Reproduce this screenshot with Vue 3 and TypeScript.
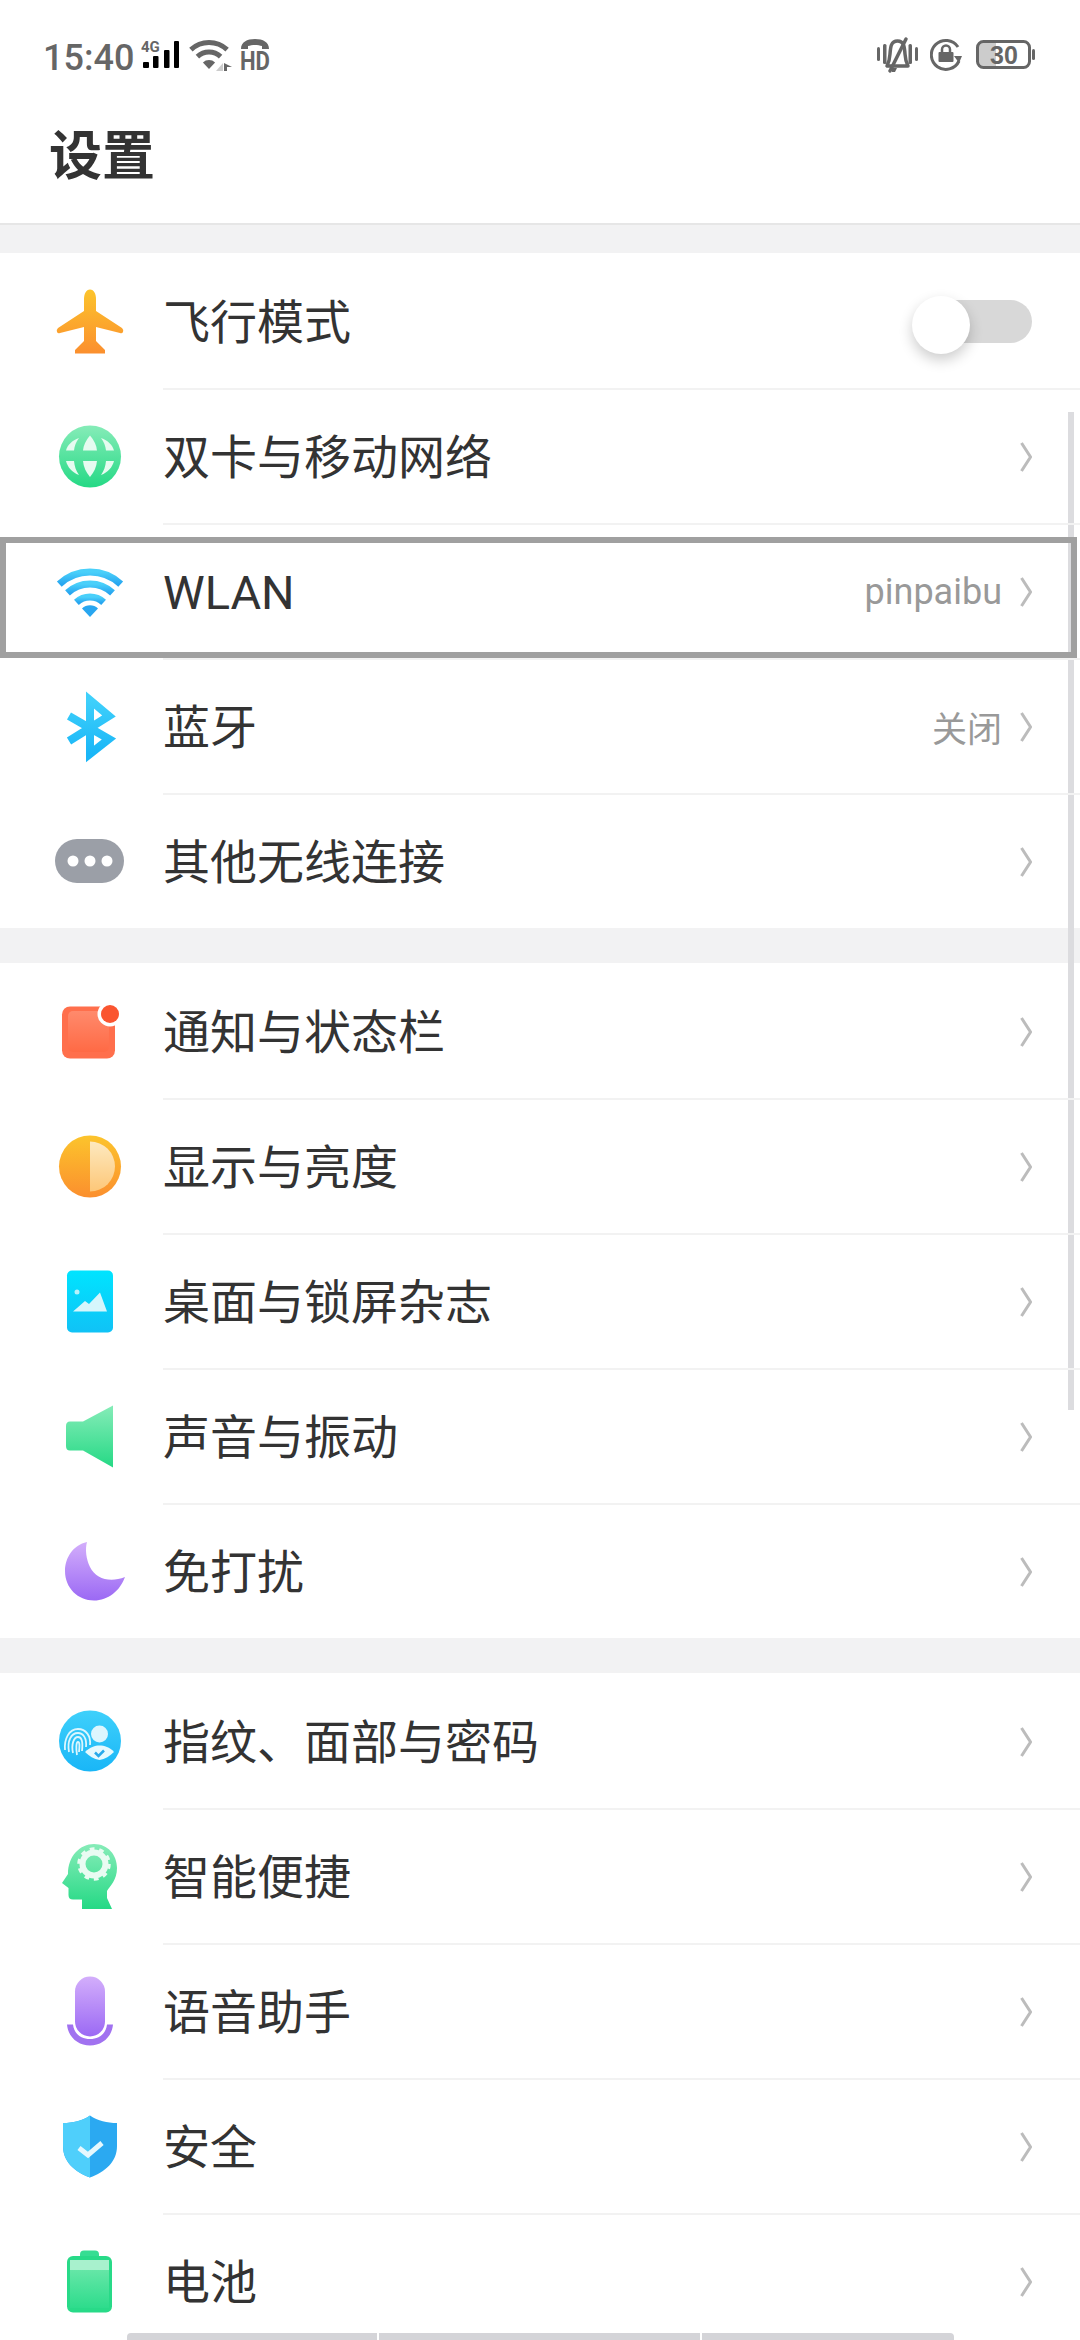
<template>
  <div class="page">
    <svg class="defs" width="0" height="0" aria-hidden="true">
      <defs>
        <linearGradient id="g-orange" x1="0" y1="0" x2="0" y2="1"><stop offset="0" stop-color="#fcc42c" /><stop offset="1" stop-color="#fb8f2e" /></linearGradient>
        <linearGradient id="g-green" x1="0" y1="0" x2="0" y2="1"><stop offset="0" stop-color="#86ecb8" /><stop offset="1" stop-color="#25d985" /></linearGradient>
        <linearGradient id="g-blue" x1="0" y1="0" x2="0" y2="1"><stop offset="0" stop-color="#4ad0fa" /><stop offset="1" stop-color="#28a6f0" /></linearGradient>
        <linearGradient id="g-sky" x1="0" y1="0" x2="0" y2="1"><stop offset="0" stop-color="#3fd0fb" /><stop offset="1" stop-color="#19b6f7" /></linearGradient>
        <linearGradient id="g-cyan" x1="0" y1="0" x2="0" y2="1"><stop offset="0" stop-color="#00e4ff" /><stop offset="1" stop-color="#10c2f6" /></linearGradient>
        <linearGradient id="g-red" x1="0" y1="0" x2="0" y2="1"><stop offset="0" stop-color="#ff8a6c" /><stop offset="1" stop-color="#ff6a45" /></linearGradient>
        <linearGradient id="g-purple" x1="0" y1="0" x2="0" y2="1"><stop offset="0" stop-color="#d3aefb" /><stop offset="1" stop-color="#9b69f4" /></linearGradient>
        <linearGradient id="g-pale" x1="0" y1="0" x2="0" y2="1"><stop offset="0" stop-color="#fde9bf" /><stop offset="1" stop-color="#fdc778" /></linearGradient>
        <linearGradient id="g-battery" x1="0" y1="0" x2="0" y2="1"><stop offset="0" stop-color="#74e9ae" /><stop offset="1" stop-color="#2ddc8c" /></linearGradient>
      </defs>
    </svg>

    <header class="header">
      <div class="status-bar">
        <span class="time">15:40</span>
        <svg class="signal" width="38" height="44" viewBox="0 0 38 44">
          <text x="0" y="16" class="net-text">4G</text>
          <rect x="2" y="26" width="6" height="6" rx="1" />
          <rect x="12" y="20" width="5.500" height="12" rx="1" />
          <rect x="23" y="14" width="5.500" height="18" rx="1" />
          <rect x="33" y="5" width="5" height="27" rx="1" />
        </svg>
        <svg class="wifi-small" width="44" height="44" viewBox="0 0 44 44">
          <g fill="none" stroke="#666" stroke-width="5">
            <path d="M1.900 13.600A26.500 26.500 0 0 1 38.100 13.600" />
            <path d="M8.400 20.600A17 17 0 0 1 31.600 20.600" />
          </g>
          <path d="M20 33L13.900 26.400A9 9 0 0 1 26.100 26.400Z" fill="#666" />
          <path d="M34 27V35H27Z" fill="#ccc" />
          <path d="M35 27L43 31H38V35H35Z" fill="#666" />
        </svg>
        <svg class="hd" width="30" height="44" viewBox="0 0 30 44">
          <path d="M1 13C1 6 7 3 15 3C23 3 29 6 29 13H22V10C18 8.500 12 8.500 8 10V13Z" fill="#666" />
          <text x="0" y="34" class="hd-text" textLength="30" lengthAdjust="spacingAndGlyphs">HD</text>
        </svg>

        <div class="status-right">
          <svg width="41" height="44" viewBox="0 0 41 44">
            <g fill="#666">
              <rect x="0" y="11" width="3" height="14" rx="1.500" />
              <rect x="6" y="8" width="3.500" height="20" rx="1.500" />
              <rect x="31.500" y="8" width="3.500" height="20" rx="1.500" />
              <rect x="38" y="11" width="3" height="14" rx="1.500" />
            </g>
            <path d="M20.500 5C14 5 13.500 11 13 18C12.700 23 11.500 27 10 30H31C29.500 27 28.300 23 28 18C27.500 11 27 5 20.500 5Z" fill="none" stroke="#666" stroke-width="3.500" stroke-linejoin="round" />
            <path d="M29 3L13 35" stroke="#666" stroke-width="3.500" stroke-linecap="round" />
            <path d="M15 32H20L18 36H15Z" fill="#666" />
          </svg>
          <svg width="32" height="44" viewBox="0 0 32 44">
            <path d="M28 11A14.500 14.500 0 1 0 29 25" fill="none" stroke="#666" stroke-width="3" />
            <path d="M24 20L32 20L29 27Z" fill="#666" />
            <rect x="8.500" y="16" width="15" height="10" rx="1" fill="#666" />
            <path d="M12 16V13.500A4 4 0 0 1 20 13.500V16" fill="none" stroke="#666" stroke-width="2.500" />
          </svg>
          <svg class="battery" width="59" height="44" viewBox="0 0 59 44">
            <path d="M5 6H20V31H5A3 3 0 0 1 3 28V9A3 3 0 0 1 5 6Z" fill="#ccc" />
            <rect x="1.500" y="5.500" width="52" height="26" rx="6" fill="none" stroke="#666" stroke-width="3" />
            <rect x="56" y="13" width="3" height="11" rx="1.500" fill="#666" />
            <text x="28" y="27.500" class="batt-text" text-anchor="middle">30</text>
          </svg>
        </div>
      </div>
      <h1 class="title">设置</h1>
    </header>

    <div class="scrollbar"></div>

    <main class="groups">
      <section v-for="(group, i) in groups" :key="i" class="group">
        <div v-for="row in group" :key="row.label" class="row" :class="{ focused: row.focused }">
          <svg class="icon" width="80" height="80" viewBox="0 0 80 80">
            <path v-if="row.icon === 'plane'" fill="url(#g-orange)" d="M40 8.500C44 8.500 46 13 46 18V30L72 47Q74 49 73 51Q72 53 70 52L46 46V60L55 69V72.500H25V69L34 60V46L10 52Q8 53 7 51Q6 49 8 47L34 30V18C34 13 36 8.500 40 8.500Z" />

            <template v-else-if="row.icon === 'globe'">
              <circle cx="40" cy="40.500" r="31" fill="url(#g-green)" />
              <g fill="#e6fbf0">
                <path d="M40 19.500C44 24 46.500 29 47 34.500H33C33.500 29 36 24 40 19.500Z" />
                <path d="M33 45H47C46.500 51 44 56 40 61C36 56 33.500 51 33 45Z" />
                <path d="M29 22C26 26 24.500 30 24 34.500H16C17.500 29 22 24.500 29 22Z" />
                <path d="M51 22C54 26 55.500 30 56 34.500H64C62.500 29 58 24.500 51 22Z" />
                <path d="M16 45H24C24.500 50 26 55 29 59C22 56.500 17.500 51 16 45Z" />
                <path d="M64 45H56C55.500 50 54 55 51 59C58 56.500 62.500 51 64 45Z" />
              </g>
            </template>

            <g v-else-if="row.icon === 'wifi'">
              <g fill="none" stroke="url(#g-blue)" stroke-width="7">
                <path d="M9.300 33.100A45 45 0 0 1 70.700 33.100" />
                <path d="M17.500 41.900A33 33 0 0 1 62.500 41.900" />
                <path d="M26.400 51.400A20 20 0 0 1 53.600 51.400" />
              </g>
              <path d="M40 66L32 57.600A11.500 11.500 0 0 1 48 57.600Z" fill="#28a6f0" />
            </g>

            <path v-else-if="row.icon === 'bluetooth'" d="M19 30L59 53L40 68V14L59 30L19 55" fill="none" stroke="url(#g-sky)" stroke-width="8" />

            <template v-else-if="row.icon === 'more'">
              <rect x="5" y="18" width="69" height="44" rx="22" fill="#9b9fa7" />
              <circle cx="23" cy="40" r="5.500" fill="#fff" />
              <circle cx="40" cy="40" r="5.500" fill="#fff" />
              <circle cx="57" cy="40" r="5.500" fill="#fff" />
            </template>

            <template v-else-if="row.icon === 'notify'">
              <rect x="12" y="15.500" width="53" height="52" rx="8" fill="#ff6f4c" />
              <rect x="18" y="20" width="41" height="41" rx="5" fill="url(#g-red)" />
              <circle cx="60" cy="23" r="12.500" fill="#fff" />
              <circle cx="60" cy="23" r="9" fill="#fa5530" />
            </template>

            <template v-else-if="row.icon === 'display'">
              <circle cx="40" cy="40.500" r="31" fill="url(#g-orange)" />
              <path d="M40 15.500A25 25 0 0 1 40 65.500Z" fill="url(#g-pale)" />
            </template>

            <template v-else-if="row.icon === 'desktop'">
              <rect x="17" y="9.500" width="46" height="62" rx="5" fill="url(#g-cyan)" />
              <path d="M23 50.500L35 40L39 43L50 31.500L57 50.500Z" fill="#d6f6fc" />
              <circle cx="27" cy="31" r="2.500" fill="#b6f2fb" />
            </template>

            <path v-else-if="row.icon === 'sound'" fill="url(#g-green)" d="M20 25.500H33L63 9.500V71.500L33 54.500H20Q16 54.500 16 50V30Q16 25.500 20 25.500Z" />

            <path v-else-if="row.icon === 'moon'" fill="url(#g-purple)" d="M37 11C23 14 15 27 15 40C15 57 28 69.500 44 69.500C58 69.500 70 60 75 46C60 52 46 48 40 36C36 28 35 18 37 11Z" />

            <template v-else-if="row.icon === 'finger'">
              <ellipse cx="40" cy="40" rx="31" ry="30.500" fill="url(#g-sky)" />
              <g fill="none" stroke="#dcf6fe" stroke-width="1.800">
                <path d="M15 49C14 38 19 28 28 28C36 28 41 35 40 44" />
                <path d="M19 51C17 40 21 32 28 32C33 32 37 37 36 46" />
                <path d="M23 52C21 43 24 36 28 36C32 36 33 41 32 50" />
                <path d="M27 54C26 48 26 41 28 41C30 41 29.500 46 29 51" />
              </g>
              <circle cx="49.500" cy="33" r="8.500" fill="#dcf6fe" />
              <path d="M35 51C40 46 45 44.500 49.500 44.500C54 44.500 60 46 64 51C60 55 55 58 49.500 59C44 58 39 55 35 51Z" fill="#e6f9fe" />
              <path d="M45 51.500L48.500 55L54 49.500" fill="none" stroke="#29a9ea" stroke-width="2.500" />
            </template>

            <template v-else-if="row.icon === 'head'">
              <path fill="url(#g-green)" d="M32 73V63.500H23Q18.500 63.500 18.500 59V52L12 47L18 38C18 20 30 8 44 8C58 8 67 19 67 32C67 44 60 50 57 55V62L62 73Z" />
              <circle cx="44" cy="28" r="11.500" fill="none" stroke="#e9fbf2" stroke-width="6" />
              <circle cx="44" cy="28" r="15" fill="none" stroke="#e9fbf2" stroke-width="3.500" stroke-dasharray="4.700 4.730" />
            </template>

            <template v-else-if="row.icon === 'mic'">
              <rect x="25" y="5.500" width="30" height="60" rx="15" fill="url(#g-purple)" />
              <path d="M17 53.500H23C24 63 31 68 40 68C49 68 56 63 57 53.500H63C62 66 52 74.500 40 74.500C28 74.500 18 66 17 53.500Z" fill="#a172f0" />
            </template>

            <template v-else-if="row.icon === 'shield'">
              <path fill="#2ba9f1" d="M40 9.500C48 15 57 17 67 17V40C67 56 55 66 40 71.500C25 66 13 56 13 40V17C23 17 32 15 40 9.500Z" />
              <path fill="#4fcffb" d="M40 9.500C32 15 23 17 13 17V40C13 56 25 66 40 71.500Z" />
              <path d="M29 42L38 49L52 37" fill="none" stroke="#e6f8fe" stroke-width="5" />
            </template>

            <template v-else-if="row.icon === 'battery'">
              <rect x="30" y="9.500" width="19" height="12" rx="4" fill="#36dd92" />
              <rect x="17" y="15" width="45" height="56.500" rx="6" fill="#28da88" />
              <rect x="20" y="19" width="39" height="48" fill="url(#g-battery)" />
              <rect x="20" y="19" width="39" height="10" fill="#a8f1cd" />
            </template>
          </svg>

          <div class="row-body">
            <span class="label">{{ row.label }}</span>
            <span v-if="row.value" class="value" :class="{ cjk: row.cjkValue }">{{ row.value }}</span>
            <div v-if="row.toggle" class="switch"><span class="thumb"></span></div>
            <svg v-else class="chevron" width="12" height="30" viewBox="0 0 12 30">
              <path d="M1.500 1L10.500 15L1.500 29" fill="none" stroke="#bcbcbc" stroke-width="3" />
            </svg>
          </div>
        </div>
      </section>
    </main>

    <div class="bottom-tabs">
      <span class="tab tab-a"></span>
      <span class="tab tab-b"></span>
      <span class="tab tab-c"></span>
    </div>
  </div>
</template>

<script setup lang="ts">
interface Row {
  icon: string
  label: string
  value?: string
  cjkValue?: boolean
  toggle?: boolean
  focused?: boolean
}

const groups: Row[][] = [
  [
    { icon: 'plane', label: '飞行模式', toggle: true },
    { icon: 'globe', label: '双卡与移动网络' },
    { icon: 'wifi', label: 'WLAN', value: 'pinpaibu', focused: true },
    { icon: 'bluetooth', label: '蓝牙', value: '关闭', cjkValue: true },
    { icon: 'more', label: '其他无线连接' },
  ],
  [
    { icon: 'notify', label: '通知与状态栏' },
    { icon: 'display', label: '显示与亮度' },
    { icon: 'desktop', label: '桌面与锁屏杂志' },
    { icon: 'sound', label: '声音与振动' },
    { icon: 'moon', label: '免打扰' },
  ],
  [
    { icon: 'finger', label: '指纹、面部与密码' },
    { icon: 'head', label: '智能便捷' },
    { icon: 'mic', label: '语音助手' },
    { icon: 'shield', label: '安全' },
    { icon: 'battery', label: '电池' },
  ],
]
</script>

<style>
html,
body {
  margin: 0;
  background: #f2f2f3;
}
</style>

<style scoped>
.page {
  position: relative;
  width: 1080px;
  height: 2340px;
  overflow: hidden;
  background: #f2f2f3;
  font-family: Roboto, "Noto Sans CJK SC", sans-serif;
}

.defs {
  position: absolute;
}

.header {
  height: 225px;
  box-sizing: border-box;
  background: #fff;
  border-bottom: 2px solid #e6e6e6;
}

.status-bar {
  display: flex;
  align-items: center;
  height: 116px;
  padding: 0 45px 0 43px;
}

.time {
  width: 98px;
  font-size: 36px;
  font-weight: 500;
  color: #666;
}

.signal {
  margin-right: 10px;
}

.wifi-small {
  margin-right: 7px;
}

.net-text {
  font-size: 15px;
  font-weight: 700;
  fill: #666;
}

.hd-text {
  font-size: 25px;
  font-weight: 700;
  fill: #666;
}

.batt-text {
  font-size: 25px;
  font-weight: 700;
  fill: #666;
  font-family: "Liberation Sans", sans-serif;
}

.status-right {
  display: flex;
  align-items: center;
  gap: 12px;
  margin-left: auto;
}

.battery {
  margin-left: 2px;
}

.title {
  margin: 15px 0 0;
  padding-left: 49px;
  font-size: 53px;
  line-height: 52px;
  font-weight: 700;
  color: #333;
}

.groups {
  display: flex;
  flex-direction: column;
  gap: 35px;
  padding-top: 28px;
}

.group {
  background: #fff;
}

.row {
  position: relative;
  display: flex;
  align-items: center;
  height: 135px;
  padding-left: 50px;
}

.row.focused::after {
  content: "";
  position: absolute;
  top: 14px;
  right: 3px;
  bottom: 0;
  left: 0;
  border: 6px solid #a0a0a0;
}

.icon {
  flex-shrink: 0;
  margin-right: 33px;
}

.row-body {
  display: flex;
  flex: 1;
  align-items: center;
  align-self: stretch;
  padding-right: 48px;
  border-top: 2px solid #f2f2f2;
}

.row:first-child .row-body {
  border-top-color: transparent;
}

.label {
  padding-top: 2px;
  font-size: 47px;
  line-height: 60px;
  color: #333;
}

.value {
  margin-left: auto;
  font-size: 36px;
  color: #999;
}

.value.cjk {
  font-size: 35px;
}

.chevron {
  flex-shrink: 0;
  margin-left: 18px;
}

.label + .chevron {
  margin-left: auto;
}

.switch {
  position: relative;
  width: 107px;
  height: 43px;
  margin-left: auto;
  border-radius: 22px;
  background: #d8d8d8;
}

.thumb {
  position: absolute;
  top: -4px;
  left: -13px;
  width: 58px;
  height: 58px;
  border-radius: 50%;
  background: #fff;
  box-shadow: 0 6px 14px rgba(0, 0, 0, 0.2);
}

.scrollbar {
  position: absolute;
  top: 412px;
  left: 1068px;
  width: 6px;
  height: 998px;
  background: #dcdcdf;
}

.bottom-tabs {
  position: absolute;
  left: 127px;
  bottom: 0;
  display: flex;
  gap: 2px;
  height: 7px;
}

.tab {
  background: #d4d4d8;
}

.tab-a {
  width: 250px;
  border-radius: 4px 0 0 0;
}

.tab-b {
  width: 321px;
}

.tab-c {
  width: 252px;
  border-radius: 0 4px 0 0;
}
</style>
